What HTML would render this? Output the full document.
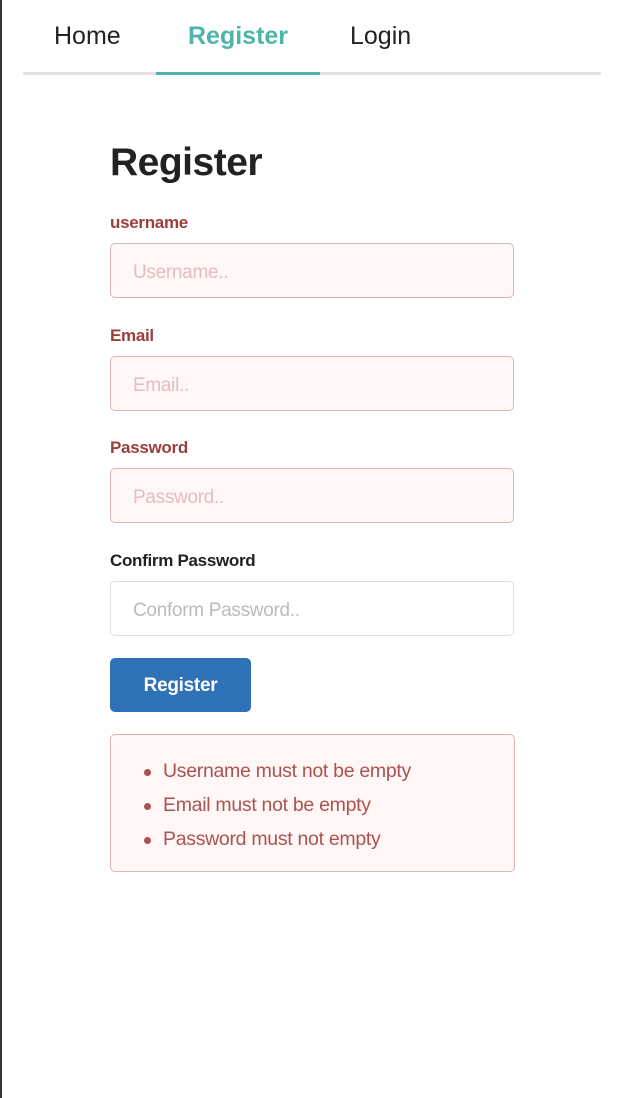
<!DOCTYPE html>
<html><head><style>
body{margin:0;width:624px;height:1098px;background:#fff;font-family:"Liberation Sans",sans-serif;position:relative;overflow:hidden}
.lb{position:absolute;left:0;top:0;width:2px;height:1098px;background:#333}
.nav{position:absolute;left:23px;top:0;width:578px;height:72px;border-bottom:3px solid #e3e3e3}
.nav a{position:absolute;top:22px;font-size:25px;color:#222}
.act{position:absolute;left:133px;top:72px;width:164px;height:3px;background:#4fb4ab}
h1{position:absolute;left:110px;top:141px;margin:0;font-size:39px;font-weight:bold;color:#222;letter-spacing:-0.5px}
.l{position:absolute;left:110px;font-size:17px;font-weight:bold;color:#9a3f3b;letter-spacing:-0.3px}
.i{position:absolute;left:110px;width:402px;height:53px;border:1px solid #e0b4b4;background:#fff6f6;border-radius:5px;box-sizing:content-box;font-size:19px;color:#e3bdbd;line-height:57px;text-indent:22px;letter-spacing:-0.3px}
.btn{position:absolute;left:110px;top:658px;width:141px;height:54px;background:#2f71b6;border-radius:5px;color:#fff;font-weight:bold;font-size:19px;text-align:center;line-height:56px;letter-spacing:-0.3px}
.msg{position:absolute;left:110px;top:734px;width:403px;height:136px;border:1px solid #e0b4b4;background:#fff6f6;border-radius:5px}
.msg div{position:absolute;left:52px;font-size:19.5px;color:#9f3a38;opacity:.87;letter-spacing:-0.3px}
.msg div:before{content:"";position:absolute;left:-19px;top:9px;width:7px;height:7px;border-radius:50%;background:#9f3a38}
</style></head><body>
<div class="lb"></div>
<div class="nav"><a style="left:31px">Home</a><a style="left:165px;color:#4fb4ab;font-weight:bold">Register</a><a style="left:327px">Login</a><div class="act"></div></div>
<h1>Register</h1>
<div class="l" style="top:213px">username</div>
<div class="i" style="top:243px">Username..</div>
<div class="l" style="top:326px">Email</div>
<div class="i" style="top:356px">Email..</div>
<div class="l" style="top:438px">Password</div>
<div class="i" style="top:468px">Password..</div>
<div class="l" style="top:551px;color:#222">Confirm Password</div>
<div class="i" style="top:581px;border-color:#dedede;background:#fff;color:#bbb">Conform Password..</div>
<div class="btn">Register</div>
<div class="msg">
<div style="top:25px">Username must not be empty</div>
<div style="top:59px">Email must not be empty</div>
<div style="top:93px">Password must not empty</div>
</div>
</body></html>
